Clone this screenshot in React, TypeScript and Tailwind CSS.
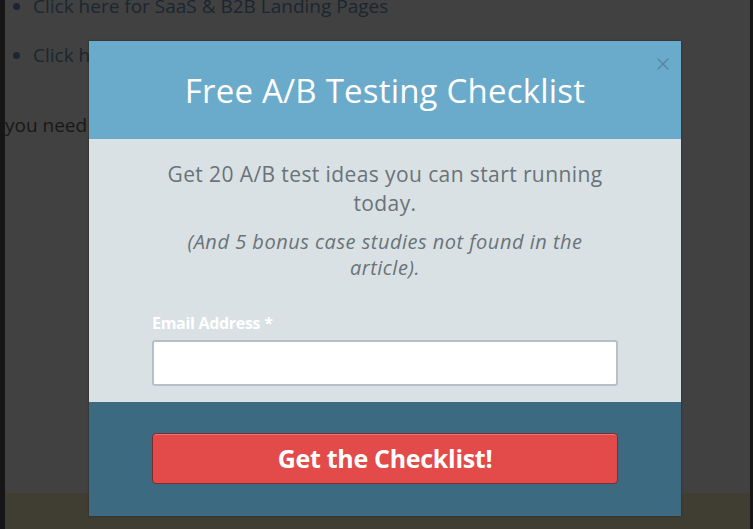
import { X } from 'lucide-react'

const font = { fontFamily: '"Open Sans", "Noto Sans", sans-serif' }

function BackgroundPage() {
  return (
    <div className="flex h-full flex-col text-[19px] text-[#1b2630]">
      <ul className="-mt-[8px] flex list-disc flex-col gap-[20px] pl-[28px]">
        <li>Click here for SaaS &amp; B2B Landing Pages</li>
        <li>Click here for Ecommerce Landing Pages</li>
      </ul>
      <p className="mt-[42px] text-[#181818]">
        you need a landing page for every campaign you run.
      </p>
      <div className="mt-auto h-[36px] bg-[#403d33]" />
    </div>
  )
}

function ChecklistModal() {
  return (
    <div className="absolute left-[84px] top-[41px] flex w-[592px] flex-col shadow-[0_0_2px_rgba(0,0,0,0.4)]">
      <div className="relative flex h-[98px] items-center justify-center bg-[#6aaacb] pt-[1px]">
        <h2 className="text-[33px] tracking-[0.2px] text-white">Free A/B Testing Checklist</h2>
        <button
          type="button"
          className="absolute right-[8px] top-[13px] text-[#55889f]"
          aria-label="Close"
        >
          <X size={20} strokeWidth={1.6} />
        </button>
      </div>

      <div className="flex flex-col items-center bg-[#d9e1e4] px-[63px] pb-[16px] pt-[21px]">
        <p className="max-w-[466px] text-center text-[21px] leading-[29px] tracking-[0.4px] text-[#6a7377]">
          Get 20 A/B test ideas you can start running today.
        </p>
        <p className="mt-[11px] max-w-[440px] text-center text-[20px] italic leading-[26px] tracking-[0.5px] text-[#6a7377]">
          (And 5 bonus case studies not found in the article).
        </p>
        <label className="mt-[32px] w-full text-[16px] font-bold leading-[20px] tracking-[-0.3px] text-white">
          Email Address *
        </label>
        <input
          type="email"
          className="mt-[7px] h-[46px] w-full rounded-[3px] border-2 border-[#b7c1c5] bg-white px-3 outline-none"
        />
      </div>

      <div className="flex flex-col bg-[#3c6a80] px-[63px] pb-[32px] pt-[31px]">
        <button
          type="button"
          className="h-[51px] w-full rounded-[4px] border border-[#7a2e2e] bg-[#e34a4a] text-[25px] font-bold tracking-[-0.3px] text-white shadow-[inset_0_1px_0_rgba(255,255,255,0.25)]"
        >
          Get the Checklist!
        </button>
      </div>
    </div>
  )
}

export default function App() {
  return (
    <div
      style={font}
      className="relative h-[529px] w-[753px] overflow-hidden border-l-[5px] border-r-[3px] border-[#161616] bg-[#414141]"
    >
      <BackgroundPage />
      <ChecklistModal />
    </div>
  )
}
